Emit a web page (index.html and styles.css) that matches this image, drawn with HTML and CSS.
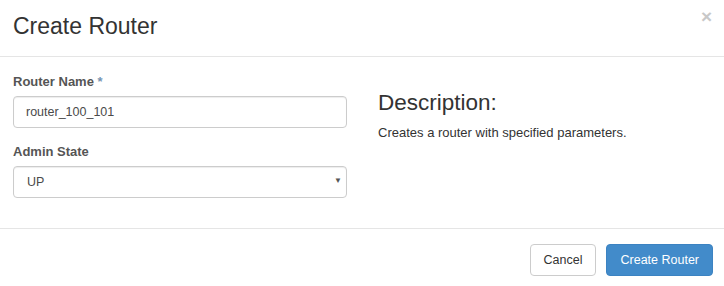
FILE: index.html
```html
<!DOCTYPE html>
<html>
<head>
  <meta charset="UTF-8">
  <title>Create Router</title>
  <link rel="stylesheet" href="styles.css">
</head>
<body>
  <div class="modal">
    <div class="modal-header">
      <h3 class="modal-title">Create Router</h3>
      <span class="close">&times;</span>
    </div>
    <div class="modal-body">
      <div class="left">
        <div class="form-group">
          <label for="name">Router Name <span class="req">*</span></label>
          <input type="text" id="name" class="form-control" value="router_100_101">
        </div>
        <div class="form-group">
          <label for="state">Admin State</label>
          <div class="select-wrap">
            <select id="state" class="form-control">
              <option>UP</option>
              <option>DOWN</option>
            </select>
            <span class="caret">&#9660;</span>
          </div>
        </div>
      </div>
      <div class="right">
        <h3>Description:</h3>
        <p>Creates a router with specified parameters.</p>
      </div>
    </div>
    <div class="modal-footer">
      <button class="btn">Cancel</button>
      <button class="btn btn-primary">Create Router</button>
    </div>
  </div>
</body>
</html>
```

FILE: styles.css
```css
body {
  margin: 0;
  font-family: "Liberation Sans", Arial, sans-serif;
  color: #333;
  background: #fff;
}
.modal {
  width: 724px;
  height: 286px;
}
.modal-header {
  display: flex;
  justify-content: space-between;
  align-items: flex-start;
  height: 57px;
  box-sizing: border-box;
  padding: 0 12px 0 13px;
  border-bottom: 1px solid #e5e5e5;
}
.modal-title {
  margin: 11px 0 0 0;
  font-size: 23px;
  font-weight: normal;
  line-height: 30px;
  color: #333;
}
.close {
  margin-top: 7px;
  font-size: 19px;
  font-weight: bold;
  color: #c8c8c8;
  line-height: 20px;
}
.modal-body {
  display: flex;
  height: 172px;
  box-sizing: border-box;
  padding: 16px 13px 0 13px;
  border-bottom: 1px solid #e5e5e5;
}
.left {
  width: 334px;
}
.right {
  margin-left: 31px;
}
.form-group {
  margin-bottom: 15px;
}
.form-group label {
  display: block;
  font-size: 13px;
  font-weight: bold;
  color: #555;
  line-height: 18px;
  margin-bottom: 5px;
}
.req {
  color: #7594b3;
}
.form-control {
  display: block;
  width: 100%;
  height: 32px;
  box-sizing: border-box;
  padding: 4px 12px;
  font-family: inherit;
  font-size: 12.5px;
  color: #4a4a4a;
  background: #fff;
  border: 1px solid #ccc;
  border-radius: 4px;
  box-shadow: inset 0 1px 1px rgba(0,0,0,0.075);
}
select.form-control {
  appearance: none;
  -webkit-appearance: none;
  padding-left: 13px;
}
.select-wrap {
  position: relative;
}
.caret {
  position: absolute;
  right: 5px;
  top: 10px;
  font-size: 8px;
  color: #555;
}
.right h3 {
  margin: 17px 0 0 0;
  font-size: 22.5px;
  font-weight: normal;
  line-height: 26px;
}
.right p {
  margin: 8px 0 0 0;
  font-size: 13px;
  line-height: 18px;
  color: #333;
}
.modal-footer {
  display: flex;
  justify-content: flex-end;
  gap: 10px;
  padding: 15px 11px 0 0;
}
.btn {
  height: 32px;
  padding: 0 13px;
  font-family: inherit;
  font-size: 12.5px;
  color: #333;
  background: #fff;
  border: 1px solid #ccc;
  border-radius: 4px;
}
.btn-primary {
  color: #fff;
  background: #428bca;
  border-color: #3c83c2;
}
```
